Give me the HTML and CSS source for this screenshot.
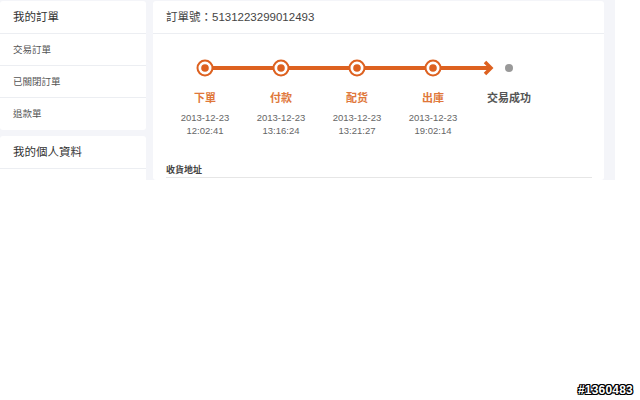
FILE: index.html
```html
<!doctype html>
<html lang="zh-Hant">
<head>
	<meta charset="UTF-8">
	<title>訂單詳情</title>
	<link rel="stylesheet" href="styles.css">
</head>
<body>
	<div class="page">
		<div class="sidebar">
			<div class="box">
				<div class="box-title">我的訂單</div>
				<a class="box-item" href="#">交易訂單</a>
				<a class="box-item" href="#">已關閉訂單</a>
				<a class="box-item last" href="#">退款單</a>
			</div>
			<div class="box">
				<div class="box-title">我的個人資料</div>
				<a class="box-item" href="#">&nbsp;</a>
			</div>
		</div>

		<div class="main">
			<div class="main-title">訂單號：5131223299012493</div>

			<div class="progress">
				<svg class="track" width="380" height="20" viewBox="0 0 380 20">
					<line x1="38" y1="10" x2="323" y2="10" stroke="#dd6120" stroke-width="4"/>
					<polyline points="318,4 324,10 318,16" fill="none" stroke="#dd6120" stroke-width="3.5" stroke-linejoin="miter"/>
					<g fill="#fff" stroke="#dd6120" stroke-width="2">
						<circle cx="38" cy="10" r="7.5"/>
						<circle cx="114" cy="10" r="7.5"/>
						<circle cx="190" cy="10" r="7.5"/>
						<circle cx="266" cy="10" r="7.5"/>
					</g>
					<g fill="#dd6120">
						<circle cx="38" cy="10" r="3.8"/>
						<circle cx="114" cy="10" r="3.8"/>
						<circle cx="190" cy="10" r="3.8"/>
						<circle cx="266" cy="10" r="3.8"/>
					</g>
					<circle cx="342" cy="10" r="4" fill="#999"/>
				</svg>
				<div class="steps">
					<div class="step done">
						<div class="step-name">下單</div>
						<div class="step-time">2013-12-23<br>12:02:41</div>
					</div>
					<div class="step done">
						<div class="step-name">付款</div>
						<div class="step-time">2013-12-23<br>13:16:24</div>
					</div>
					<div class="step done">
						<div class="step-name">配货</div>
						<div class="step-time">2013-12-23<br>13:21:27</div>
					</div>
					<div class="step done">
						<div class="step-name">出庫</div>
						<div class="step-time">2013-12-23<br>19:02:14</div>
					</div>
					<div class="step">
						<div class="step-name">交易成功</div>
					</div>
				</div>
			</div>

			<div class="section-title">收貨地址</div>
		</div>
	</div>

	<div class="stamp">#1360483</div>
</body>
</html>
```

FILE: styles.css
```css
body {
	margin: 0;
	background: #fff;
	font-family: "Liberation Sans", "Noto Sans CJK TC", sans-serif;
	color: #333;
}

.page { display: flex; gap: 7px; width: 604px; height: 179px; padding: 1px 11px 0 0; background: #f4f5f9; overflow: hidden; }

.sidebar { width: 146px; display: flex; flex-direction: column; gap: 6px; }
.box { background: #fff; border-radius: 3px; }
.box-title { height: 32px; line-height: 32px; padding-left: 13px; font-size: 11.5px; color: #333; border-bottom: 1px solid #eceef2; }
.box-item { display: block; height: 31px; line-height: 31px; padding-left: 13px; font-size: 9.5px; color: #555; text-decoration: none; border-bottom: 1px solid #eceef2; }
.box-item.last { height: 32px; line-height: 32px; border-bottom: none; }

.main { flex: 1; background: #fff; border-radius: 3px; }
.main-title { height: 32px; line-height: 32px; padding-left: 13px; font-size: 11.5px; color: #444; border-bottom: 1px solid #eceef2; }

.progress { padding: 24px 0 0 14px; }
.track { display: block; }
.steps { display: flex; margin-top: 12px; }
.step { width: 76px; text-align: center; }
.step-name { font-size: 11px; font-weight: bold; color: #555; line-height: 16px; }
.step.done .step-name { color: #e0773a; }
.step-time { margin-top: 5px; font-size: 9.5px; line-height: 13px; color: #666; }

.section-title { margin: 26px 12px 0 13px; padding-bottom: 1px; font-size: 9px; font-weight: bold; color: #444; border-bottom: 1px solid #e6e6e6; }

.stamp { position: absolute; right: 7px; bottom: 3px; font-size: 12px; font-weight: bold; color: #fff; font-family: "Liberation Sans", sans-serif; letter-spacing: 0.2px; text-shadow: 1px 0 #000, -1px 0 #000, 0 1px #000, 0 -1px #000, 1px 1px #000, -1px -1px #000, 1px -1px #000, -1px 1px #000; }
```
